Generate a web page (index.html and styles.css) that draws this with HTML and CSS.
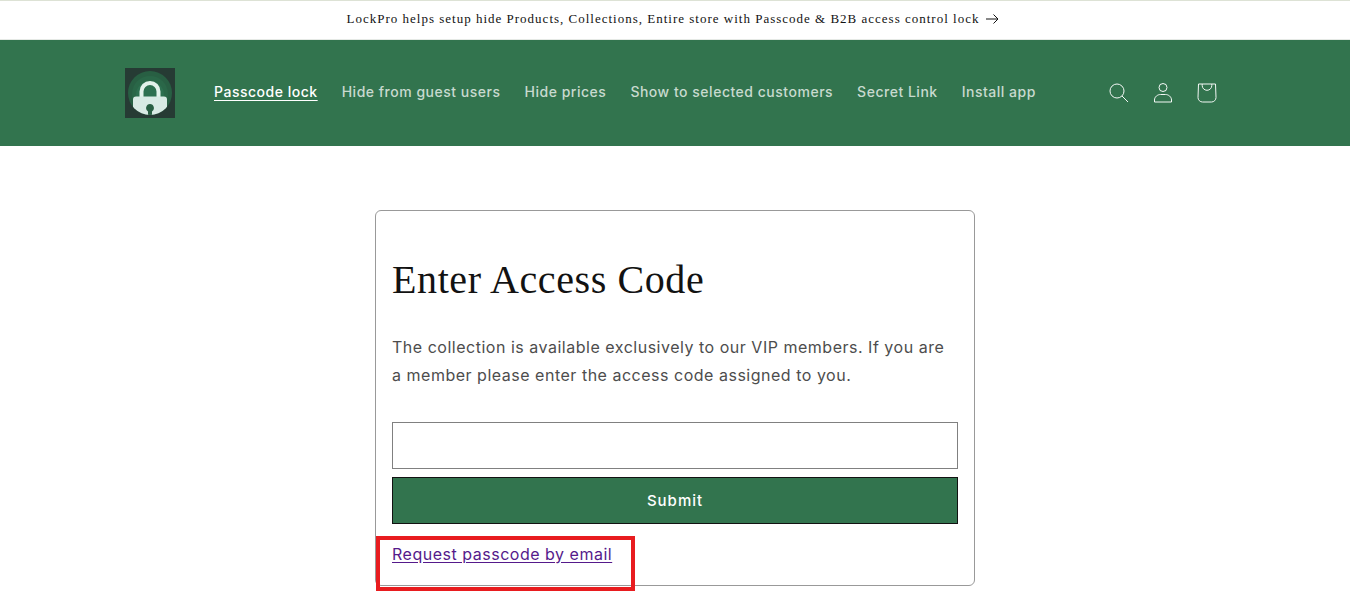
FILE: index.html
```html
<!DOCTYPE html>
<html lang="en">
<head>
    <meta charset="UTF-8">
    <meta name="viewport" content="width=device-width, initial-scale=1.0">
    <title>Enter Access Code</title>
    <link rel="stylesheet" href="styles.css">
</head>
<body>
    <div class="announcement">
        <a href="#" class="announcement-link">
            <span>LockPro helps setup hide Products, Collections, Entire store with Passcode &amp; B2B access control lock</span>
            <svg class="arrow" viewBox="0 0 14 10" fill="none" stroke="currentColor" aria-hidden="true">
                <path d="M1 5h12M8.500 .5L13 5l-4.500 4.500"/>
            </svg>
        </a>
    </div>

    <header class="header">
        <div class="header-inner">
            <a href="#" class="logo" aria-label="LockPro home">
                <svg viewBox="0 0 50 50" aria-hidden="true">
                    <defs>
                        <clipPath id="badge"><circle cx="25" cy="25" r="22"/></clipPath>
                    </defs>
                    <rect width="50" height="50" fill="#263b34"/>
                    <circle cx="25" cy="25" r="22" fill="#285f43"/>
                    <circle cx="25" cy="26" r="18" fill="#2a6748"/>
                    <circle cx="25" cy="27" r="14" fill="#2d7050"/>
                    <path d="M16.500 30v-6.500a8.500 8.500 0 0 1 17 0V30" fill="none" stroke="#e2f1ea" stroke-width="4"/>
                    <g clip-path="url(#badge)">
                        <rect x="8" y="28.500" width="34" height="22" rx="3" fill="#d8eae4"/>
                        <path d="M25 36a4 4 0 0 1 2 7.400V50h-4v-6.600A4 4 0 0 1 25 36z" fill="#285f43"/>
                    </g>
                </svg>
            </a>
            <nav class="nav">
                <a href="#" class="active" aria-current="page"><span>Passcode lock</span></a>
                <a href="#"><span>Hide from guest users</span></a>
                <a href="#"><span>Hide prices</span></a>
                <a href="#"><span>Show to selected customers</span></a>
                <a href="#"><span>Secret Link</span></a>
                <a href="#"><span>Install app</span></a>
            </nav>
            <div class="header-icons">
                <button type="button" aria-label="Search">
                    <svg viewBox="0 0 20 20" aria-hidden="true">
                        <circle cx="8" cy="8" r="7"/>
                        <path d="M13 13l6 6"/>
                    </svg>
                </button>
                <a href="#" aria-label="Log in">
                    <svg viewBox="0 0 20 20" aria-hidden="true">
                        <circle cx="10" cy="4.500" r="4"/>
                        <path d="M1.500 19v-2c0-3.200 3-5.500 6-5.500h5c3 0 6 2.300 6 5.500v2z"/>
                    </svg>
                </a>
                <a href="#" aria-label="Cart">
                    <svg viewBox="0 0 20 20" aria-hidden="true">
                        <path d="M1.500 1h17l.5 13.500a4.500 4.500 0 0 1-4.500 4.500h-9a4.500 4.500 0 0 1-4.500-4.500z"/>
                        <path d="M5.200 1v1.500a4.800 4.800 0 0 0 9.600 0V1"/>
                    </svg>
                </a>
            </div>
        </div>
    </header>

    <main class="main">
        <form class="card">
            <h1>Enter Access Code</h1>
            <p>The collection is available exclusively to our VIP members. If you are a member please enter the access code assigned to you.</p>
            <input type="text" name="code" aria-label="Access code">
            <button type="submit" class="submit">Submit</button>
            <div class="request">
                <a href="#">Request passcode by email</a>
            </div>
        </form>
    </main>
</body>
</html>
```

FILE: styles.css
```css
*,
*::after {
    box-sizing: border-box;
}

body {
    margin: 0;
    background: #fff;
    color: #121212;
    font-family: Inter, sans-serif;
    font-size: 16px;
    letter-spacing: 0.032em;
}

/* Announcement bar */
.announcement {
    border-top: 1px solid #dde2d5;
    border-bottom: 1px solid #e5e9e5;
    padding: 7px 24px 9px 20px;
    text-align: center;
}

.announcement-link {
    display: inline-flex;
    align-items: center;
    gap: 6px;
    color: #121212;
    font-family: "Liberation Serif", serif;
    font-size: 13px;
    line-height: 22px;
    letter-spacing: 1px;
    text-decoration: none;
    vertical-align: top;
}

.arrow {
    width: 14px;
    height: 10px;
}

/* Header */
.header {
    background: #32744e;
}

.header-inner {
    display: flex;
    align-items: center;
    max-width: 1200px;
    margin: 0 auto;
    padding: 28px 46px 28px 50px;
}

.logo {
    width: 50px;
    height: 50px;
    margin-right: 27px;
}

.logo svg {
    display: block;
}

.nav {
    display: flex;
    flex: 1;
}

.nav a {
    padding: 11px 12px 13px;
    color: #c8dacf;
    font-size: 14px;
    font-weight: 500;
    line-height: 18px;
    text-decoration: none;
}

.nav a:hover,
.nav .active {
    color: #fff;
}

.nav .active span {
    text-decoration: underline;
    text-underline-offset: 3px;
}

.header-icons {
    display: flex;
}

.header-icons a,
.header-icons button {
    display: flex;
    align-items: center;
    justify-content: center;
    width: 44px;
    height: 44px;
    padding: 0;
    border: none;
    background: none;
    color: #f3f8f5;
    cursor: pointer;
}

.header-icons svg {
    width: 20px;
    height: 20px;
    fill: none;
    stroke: currentColor;
}

/* Access code form */
.main {
    padding: 64px 20px 8px;
}

.card {
    max-width: 600px;
    margin: 0 auto;
    padding: 16px;
    border: 1px solid #999;
    border-radius: 6px;
}

h1 {
    margin: 27px 0;
    font-family: "Liberation Serif", serif;
    font-size: 40px;
    font-weight: 400;
    line-height: 52px;
    letter-spacing: 0.015em;
}

.card p {
    margin: 0 0 33px;
    color: #4d4d4d;
    line-height: 28px;
}

.card input {
    display: block;
    width: 100%;
    height: 47px;
    margin-bottom: 8px;
    padding: 0 12px;
    border: 1px solid #808080;
    font: inherit;
}

.submit {
    display: block;
    width: 100%;
    height: 47px;
    border: 1px solid #121212;
    background: #32744e;
    color: #fff;
    font-family: inherit;
    font-size: 15px;
    font-weight: 500;
    letter-spacing: 1px;
    cursor: pointer;
}

.submit:hover {
    background: #2b6544;
}

.request {
    position: relative;
    padding-top: 16px;
    line-height: 29px;
}

.request a {
    color: #551a8b;
    text-underline-offset: 2px;
}

/* Red highlight frame, drawn over the card's corner */
.request::after {
    content: "";
    position: absolute;
    top: 12px;
    left: -16px;
    width: 259px;
    height: 55px;
    border: 4px solid #e81c1f;
    pointer-events: none;
}
```
